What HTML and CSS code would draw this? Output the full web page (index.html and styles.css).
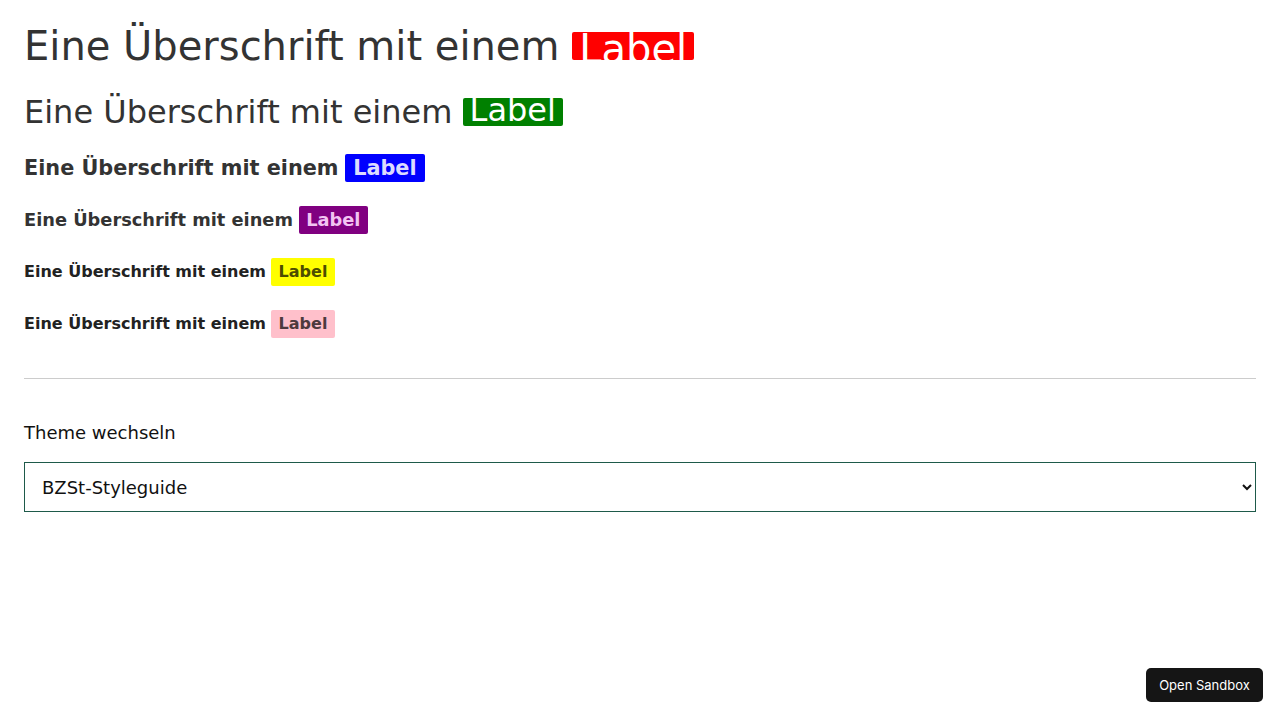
FILE: index.html
```html
<!DOCTYPE html>
<html lang="de">
<head>
<meta charset="utf-8">
<title>Überschriften mit Label</title>
<link rel="stylesheet" href="styles.css">
</head>
<body>
<main class="page">
  <section class="headings">
    <h1 class="heading h1">Eine Überschrift mit einem<span class="label label-red">Label</span></h1>
    <h2 class="heading h2">Eine Überschrift mit einem<span class="label label-green">Label</span></h2>
    <h3 class="heading h3">Eine Überschrift mit einem<span class="label label-blue">Label</span></h3>
    <h4 class="heading h4">Eine Überschrift mit einem<span class="label label-purple">Label</span></h4>
    <h5 class="heading h5">Eine Überschrift mit einem<span class="label label-yellow">Label</span></h5>
    <h6 class="heading h6">Eine Überschrift mit einem<span class="label label-pink">Label</span></h6>
  </section>
  <hr class="divider">
  <div class="theme">
    <label class="theme-label" for="theme">Theme wechseln</label>
    <select class="theme-select" id="theme">
      <option>BZSt-Styleguide</option>
    </select>
  </div>
</main>
<button class="sandbox-btn" type="button">Open Sandbox</button>
</body>
</html>
```
FILE: styles.css
```css
html, body {
  margin: 0;
  padding: 0;
  background: #fff;
}
body {
  font-family: "DejaVu Sans", Verdana, sans-serif;
  color: #333;
}
.page {
  padding: 24px;
}
.headings {
  display: flex;
  flex-direction: column;
}
.heading {
  display: flex;
  align-items: center;
  gap: 0.32em;
  margin: 0 0 24px;
  color: #333;
  white-space: nowrap;
}
.h1 { font-size: 40px; font-weight: 400; line-height: 44px; }
.h2 { font-size: 32px; font-weight: 400; line-height: 40px; margin-bottom: 22px; }
.h3 { font-size: 20.8px; font-weight: 700; line-height: 28px; }
.h4 { font-size: 17.8px; font-weight: 700; line-height: 28px; }
.h5 { font-size: 16px; font-weight: 700; line-height: 28px; color: #222; }
.h6 { font-size: 16px; font-weight: 700; line-height: 28px; margin-bottom: 0; color: #222; }

.label {
  display: inline-block;
  height: 28px;
  line-height: 28px;
  padding: 0 8px;
  border-radius: 2px;
  overflow: hidden;
  font-size: inherit;
  font-weight: inherit;
}
.label-red { background: #ff0000; color: #fff; padding: 0 7px; line-height: 34px; }
.label-green { background: #008000; color: #fff; padding: 0 7px; line-height: 25px; overflow: visible; }
.label-blue { background: #0000ff; color: #dcdcff; }
.label-purple { background: #800080; color: #f2c4f2; padding: 0 7.5px; }
.label-yellow { background: #ffff00; color: #4d4d00; padding: 0 7.5px; }
.label-pink { background: #ffc0cb; color: #4d3a3d; padding: 0 7.5px; }

.divider {
  border: 0;
  border-top: 1px solid #cccccc;
  margin: 40px 0 40px;
  height: 0;
}
.theme {
  display: flex;
  flex-direction: column;
}
.theme-label {
  font-size: 18px;
  line-height: 27px;
  color: #111;
  margin-bottom: 16px;
}
.theme-select {
  height: 50px;
  width: 100%;
  box-sizing: border-box;
  border: 1px solid #1e5a4a;
  border-radius: 0;
  background: #fff;
  font-family: "DejaVu Sans", Verdana, sans-serif;
  font-size: 18px;
  color: #111;
  padding: 0 13px;
}
.sandbox-btn {
  position: fixed;
  right: 17px;
  bottom: 18px;
  height: 34px;
  width: 117px;
  border: 0;
  border-radius: 5px;
  background: #151515;
  color: #fff;
  font-family: Inter, "Noto Sans", sans-serif;
  font-size: 13px;
  padding: 0;
}
```
